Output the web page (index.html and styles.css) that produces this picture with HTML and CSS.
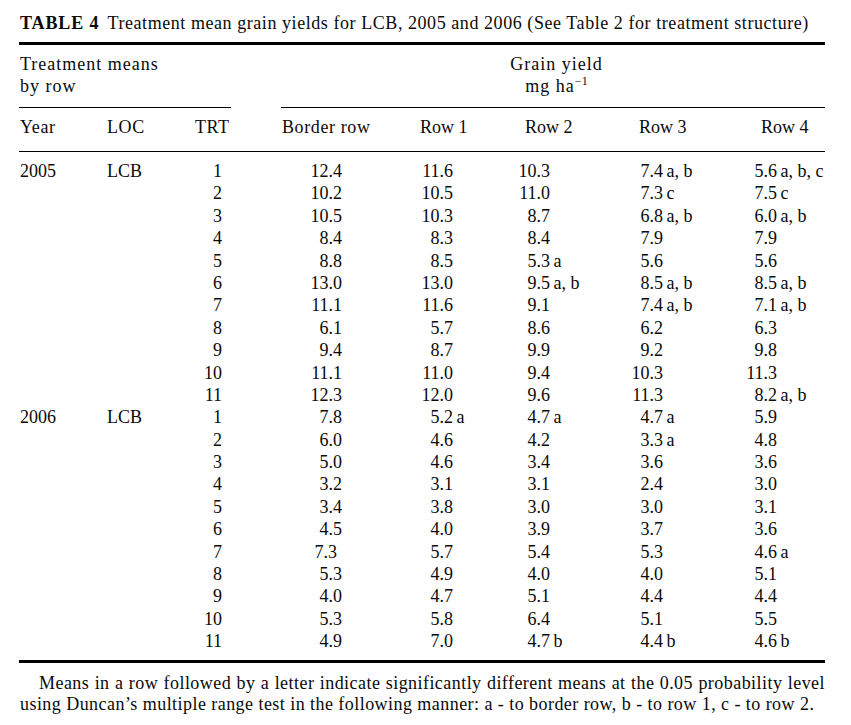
FILE: index.html
```html
<!DOCTYPE html>
<html lang="en">
<head>
<meta charset="utf-8">
<title>Table 4</title>
<link rel="stylesheet" href="styles.css">
</head>
<body>
<div class="page">
  <div class="caption"><b>TABLE 4</b><span class="capgap"></span>Treatment mean grain yields for LCB, 2005 and 2006 (See Table 2 for treatment structure)</div>
  <div class="rule-thick"></div>

  <div class="row head1">
    <div class="h-left">Treatment means<br>by row</div>
    <div class="h-right">Grain yield<br><span class="unit">mg ha<sup>−1</sup></span></div>
  </div>
  <div class="row rules-mid">
    <div class="rule-l"></div>
    <div class="rule-r"></div>
  </div>
  <div class="row head2">
    <div class="c1">Year</div>
    <div class="c2">LOC</div>
    <div class="c3">TRT</div>
    <div class="c4">Border row</div>
    <div class="c5 rh">Row 1</div>
    <div class="c6 rh">Row 2</div>
    <div class="c7 rh">Row 3</div>
    <div class="c8 rh">Row 4</div>
  </div>
  <div class="rule-thin"></div>

  <div class="body" id="tbody"></div>

  <div class="rule-thick bottom"></div>
  <div class="note">
    <span class="note1">Means in a row followed by a letter indicate significantly different means at the 0.05 probability level</span>
    <span class="note2">using Duncan’s multiple range test in the following manner: a - to border row, b - to row 1, c - to row 2.</span>
  </div>
</div>
<script src="app.js"></script>
</body>
</html>
```
FILE: app.js
```js
const data = [
  ["2005","LCB","1","12.4","11.6","10.3","7.4|a, b","5.6|a, b, c"],
  ["","","2","10.2","10.5","11.0","7.3|c","7.5|c"],
  ["","","3","10.5","10.3","8.7","6.8|a, b","6.0|a, b"],
  ["","","4","8.4","8.3","8.4","7.9","7.9"],
  ["","","5","8.8","8.5","5.3|a","5.6","5.6"],
  ["","","6","13.0","13.0","9.5|a, b","8.5|a, b","8.5|a, b"],
  ["","","7","11.1","11.6","9.1","7.4|a, b","7.1|a, b"],
  ["","","8","6.1","5.7","8.6","6.2","6.3"],
  ["","","9","9.4","8.7","9.9","9.2","9.8"],
  ["","","10","11.1","11.0","9.4","10.3","11.3"],
  ["","","11","12.3","12.0","9.6","11.3","8.2|a, b"],
  ["2006","LCB","1","7.8","5.2|a","4.7|a","4.7|a","5.9"],
  ["","","2","6.0","4.6","4.2","3.3|a","4.8"],
  ["","","3","5.0","4.6","3.4","3.6","3.6"],
  ["","","4","3.2","3.1","3.1","2.4","3.0"],
  ["","","5","3.4","3.8","3.0","3.0","3.1"],
  ["","","6","4.5","4.0","3.9","3.7","3.6"],
  ["","","7","7.3*","5.7","5.4","5.3","4.6|a"],
  ["","","8","5.3","4.9","4.0","4.0","5.1"],
  ["","","9","4.0","4.7","5.1","4.4","4.4"],
  ["","","10","5.3","5.8","6.4","5.1","5.5"],
  ["","","11","4.9","7.0","4.7|b","4.4|b","4.6|b"]
];
const tbody = document.getElementById("tbody");
data.forEach(r => {
  const row = document.createElement("div");
  row.className = "row drow";
  const mk = (cls, txt) => {
    const d = document.createElement("div");
    d.className = cls;
    d.textContent = txt;
    row.appendChild(d);
    return d;
  };
  mk("c1", r[0]);
  mk("c2", r[1]);
  const t = mk("c3 trt", "");
  const tn = document.createElement("span");
  tn.className = "tn";
  tn.textContent = r[2];
  t.appendChild(tn);
  for (let i = 3; i < 8; i++) {
    const cell = document.createElement("div");
    cell.className = "c" + (i + 1) + " val";
    let v = r[i];
    const n = document.createElement("span");
    n.className = "n";
    if (v.endsWith("*")) { v = v.slice(0, -1); n.classList.add("shift"); }
    const parts = v.split("|");
    n.textContent = parts[0];
    cell.appendChild(n);
    if (parts[1]) {
      const s = document.createElement("span");
      s.className = "sfx";
      s.textContent = parts[1];
      cell.appendChild(s);
    }
    row.appendChild(cell);
  }
  tbody.appendChild(row);
});
```
FILE: styles.css
```css
html, body {
  margin: 0;
  padding: 0;
  background: #fff;
}
body {
  color: #0a0a0a;
  font-family: "Liberation Serif", "Times New Roman", serif;
  font-size: 18px;
}
.page {
  width: 806px;
  margin-left: 19px;
  padding-top: 12px;
}
.caption {
  line-height: 22px;
  padding-left: 1px;
  letter-spacing: 0.56px;
  white-space: nowrap;
}
.caption b {
  font-weight: bold;
  letter-spacing: 0.9px;
}
.capgap {
  display: inline-block;
  width: 8px;
}
.rule-thick {
  height: 3px;
  background: #000;
  margin-top: 8px;
}
.rule-thick.bottom {
  margin-top: 7.5px;
}
.row {
  display: grid;
  grid-template-columns: 88px 88px 37px 50px 138px 105px 114px 122px 64px;
}
.head1 {
  margin-top: 8px;
  line-height: 22px;
  letter-spacing: 1px;
}
.h-left {
  grid-column: 1 / 4;
  padding-left: 1px;
}
.h-right {
  grid-column: 5 / 10;
  text-align: center;
  padding-left: 6px;
}
.unit sup {
  font-size: 12px;
  line-height: 0;
  vertical-align: 7px;
  letter-spacing: 0;
}
.rules-mid {
  margin-top: 10px;
  height: 1px;
}
.rule-l {
  grid-column: 1 / 4;
  background: #000;
  margin-right: 1px;
}
.rule-r {
  grid-column: 5 / 10;
  background: #000;
  margin-left: -1px;
}
.head2 {
  margin-top: 8px;
  line-height: 22px;
  letter-spacing: 0.6px;
}
.head2 .rh {
  letter-spacing: 0;
}
.head2 .c1 { padding-left: 1px; }
.head2 .c3 { white-space: nowrap; }
.c1 { grid-column: 1; }
.c2 { grid-column: 2; }
.c3 { grid-column: 3; }
.c4 { grid-column: 5; }
.c5 { grid-column: 6; }
.c6 { grid-column: 7; }
.c7 { grid-column: 8; }
.c8 { grid-column: 9; }
.rule-thin {
  height: 1px;
  background: #000;
  margin-top: 13px;
}
.body {
  padding-top: 8px;
}
.drow {
  line-height: 22.4px;
  height: 22.4px;
}
.drow .c1 { padding-left: 1px; }
.trt {
  display: flex;
}
.tn {
  width: 27px;
  text-align: right;
}
.val {
  display: flex;
  white-space: nowrap;
}
.n {
  flex: none;
  width: 45px;
  text-align: right;
}
.c4 .n { margin-left: 15px; }
.c5 .n { margin-left: -12px; }
.c6 .n { margin-left: -20px; }
.c7 .n { margin-left: -21px; }
.c8 .n { margin-left: -29px; }
.n.shift { margin-left: 10px; }
.sfx {
  margin-left: 3.5px;
}
.note {
  margin-top: 10px;
  line-height: 21px;
  letter-spacing: 0.45px;
}
.note1 {
  display: block;
  text-indent: 20px;
  text-align: justify;
  text-align-last: justify;
  white-space: nowrap;
}
.note2 {
  display: block;
  padding-left: 1px;
  white-space: nowrap;
}
```
